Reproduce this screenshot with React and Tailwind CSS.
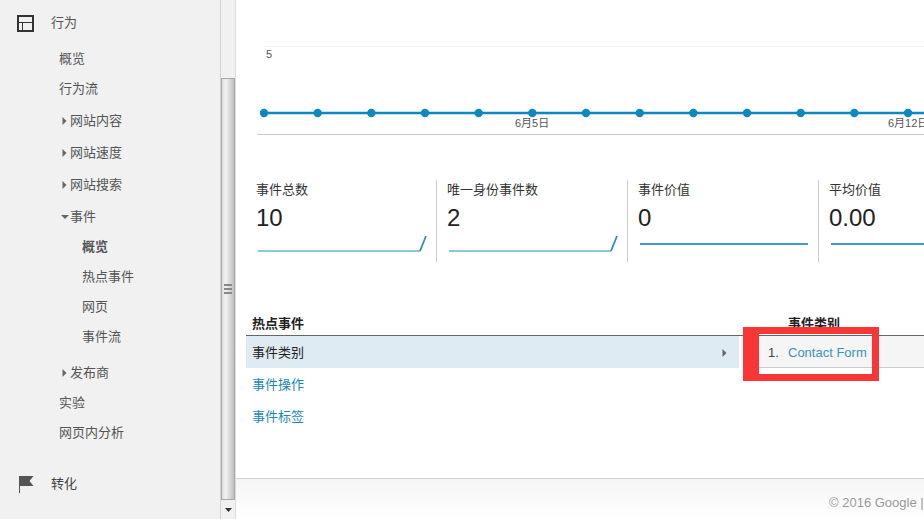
import React from 'react';

const cjk = { fontFamily: '"Liberation Sans", "Noto Sans CJK SC", sans-serif' };

const dots = Array.from({ length: 13 }, (_, i) => 18 + i * 53.67);

const metrics = [
  { label: '事件总数', value: '10', spike: true },
  { label: '唯一身份事件数', value: '2', spike: true },
  { label: '事件价值', value: '0', spike: false },
  { label: '平均价值', value: '0.00', spike: false },
];

const RightArrow = () => (
  <svg width="5" height="8" viewBox="0 0 5 8" className="shrink-0">
    <path d="M0.5 0 L4.5 4 L0.5 8 Z" fill="#666" />
  </svg>
);

const DownArrow = () => (
  <svg width="8" height="4" viewBox="0 0 8 4" className="shrink-0">
    <path d="M0 0 L8 0 L4 4 Z" fill="#666" />
  </svg>
);

const SubItem = ({ children, height = 'h-[30px]', extra = '' }) => (
  <div className={`flex items-center pl-[59px] ${height} ${extra}`}>{children}</div>
);

const TreeItem = ({ children, open, extra = '' }) => (
  <div className={`flex items-center h-[32px] pl-[59px] ${extra}`}>
    <span className="w-[11px] flex justify-center">{open ? <DownArrow /> : <RightArrow />}</span>
    <span>{children}</span>
  </div>
);

const Leaf = ({ children, bold, extra = '' }) => (
  <div className={`flex items-center h-[30px] pl-[82px] ${bold ? 'font-bold' : ''} ${extra}`}>{children}</div>
);

const Sidebar = () => (
  <div className="w-[220px] shrink-0 bg-[#f1f1f1] text-[13px] text-[#555] flex flex-col">
    <div className="flex items-center h-[46px] pl-[17px]">
      <svg width="17" height="17" viewBox="0 0 17 17" className="shrink-0">
        <rect x="1" y="1" width="15" height="15" fill="none" stroke="#333" strokeWidth="2" />
        <path d="M1 7.5 H16 M5.5 7.5 V16" stroke="#333" strokeWidth="1" fill="none" />
      </svg>
      <span className="ml-[17px]">行为</span>
    </div>
    <SubItem height="h-[26px]">概览</SubItem>
    <SubItem extra="mt-[2px]">行为流</SubItem>
    <TreeItem extra="mt-[1px]">网站内容</TreeItem>
    <TreeItem>网站速度</TreeItem>
    <TreeItem>网站搜索</TreeItem>
    <TreeItem open>事件</TreeItem>
    <Leaf bold extra="mt-[-1px]">概览</Leaf>
    <Leaf>热点事件</Leaf>
    <Leaf>网页</Leaf>
    <Leaf>事件流</Leaf>
    <TreeItem extra="mt-[5px]">发布商</TreeItem>
    <SubItem extra="mt-[-1px]">实验</SubItem>
    <SubItem>网页内分析</SubItem>
    <div className="flex items-center h-[32px] pl-[19px] mt-[20px]">
      <svg width="15" height="17" viewBox="0 0 15 17" className="shrink-0">
        <path d="M0 0 H1 V17 H0 Z" fill="#555" />
        <path d="M1 0 H14.5 L10.5 5 L14.5 10 H1 Z" fill="#555" />
      </svg>
      <span className="ml-[17px] text-[#444]">转化</span>
    </div>
  </div>
);

const Scrollbar = () => (
  <div className="w-[15px] shrink-0 bg-[#f1f1f1] border-l border-[#d4d4d4] flex flex-col">
    <div className="h-[78px] shrink-0" />
    <div className="h-[422px] shrink-0 border border-[#a8a8a8] bg-gradient-to-r from-[#dcdcdc] via-[#f2f2f2] via-30% to-[#bfbfbf] flex items-center justify-center">
      <div className="flex flex-col gap-[2px]">
        <div className="w-[8px] h-[2px] bg-[#888]" />
        <div className="w-[8px] h-[2px] bg-[#888]" />
        <div className="w-[8px] h-[2px] bg-[#888]" />
      </div>
    </div>
    <div className="flex-1 flex items-center justify-center">
      <svg width="7" height="4" viewBox="0 0 7 4">
        <path d="M0 0 H7 L3.5 4 Z" fill="#333" />
      </svg>
    </div>
  </div>
);

const Chart = () => (
  <svg width="678" height="90" viewBox="0 0 678 90" className="block ml-[10px]" style={cjk}>
    <line x1="18" y1="0.5" x2="678" y2="0.5" stroke="#f4f4f4" />
    <text x="20" y="12" fontSize="11" fill="#555">5</text>
    <line x1="18" y1="67" x2="678" y2="67" stroke="#0f87bf" strokeWidth="2.4" />
    {dots.map((x) => (
      <circle key={x} cx={x} cy="67" r="4.2" fill="#0f87bf" />
    ))}
    <text x="269" y="81" fontSize="11" fill="#555">6月5日</text>
    <text x="642" y="81" fontSize="11" fill="#555">6月12日</text>
    <line x1="11" y1="88.5" x2="678" y2="88.5" stroke="#c8c8c8" />
  </svg>
);

const Metric = ({ label, value, spike }) => (
  <div className="w-[191px] h-[82px] shrink-0 pl-[10px] border-r border-[#ccc] flex flex-col">
    <div className="text-[13px] leading-[18px] mt-[1px] text-[#333]">{label}</div>
    <div className="text-[24px] leading-[28px] mt-[5px] text-[#222]">{value}</div>
    <svg width="172" height="20" viewBox="0 0 172 20" className="block mt-[2px]">
      {spike ? (
        <>
          <path d="M2 17 H164" fill="none" stroke="#63b7d0" strokeWidth="1.6" />
          <path d="M164 17 L170 2" fill="none" stroke="#2f8fa8" strokeWidth="1.8" />
        </>
      ) : (
        <path d="M2 10 H170" fill="none" stroke="#3f9bc6" strokeWidth="2" />
      )}
    </svg>
  </div>
);

const EventTable = () => (
  <div className="relative mt-[50px] text-[13px]">
    <div className="flex h-[24px] pt-[2px] border-b border-[#666] font-bold text-[#222]">
      <div className="w-[493px] shrink-0 pl-[6px]">热点事件</div>
      <div className="pl-[49px]">事件类别</div>
    </div>
    <div className="flex">
      <div className="w-[493px] shrink-0">
        <div className="h-[32px] pt-[1px] bg-[#deebf3] pl-[6px] pr-[12px] flex items-center justify-between text-[#222]">
          <span>事件类别</span>
          <RightArrow />
        </div>
        <div className="h-[32px] pt-[1px] pl-[6px] flex items-center text-[#1a87b8]">事件操作</div>
        <div className="h-[32px] pt-[1px] pl-[6px] flex items-center text-[#1a87b8]">事件标签</div>
      </div>
      <div className="flex-1 h-[32px] pt-[2px] ml-[4px] bg-[#f5f5f5] border-b border-[#ccc] flex items-center pl-[25px]">
        <span className="w-[20px] text-[#444]">1.</span>
        <span className="text-[#3c92bf]">Contact Form</span>
      </div>
    </div>
    {/* red highlight drawn over the screenshot */}
    <div className="absolute left-[497px] top-[15px] w-[136px] h-[54px] border-[#f93636] border-y-[7px] border-r-[7px] border-l-[16px]" />
  </div>
);

const Footer = () => (
  <div className="mt-auto h-[41px] pt-[8px] border-t border-[#d0d0d0] bg-gradient-to-b from-[#f5f5f5] to-white flex items-center pl-[593px] text-[13px] text-[#999] whitespace-nowrap overflow-hidden">
    © 2016 Google |
  </div>
);

export default function App() {
  return (
    <div className="flex w-[924px] h-[519px] overflow-hidden bg-white" style={cjk}>
      <Sidebar />
      <Scrollbar />
      <div className="flex-1 min-w-0 border-l border-[#ddd] flex flex-col overflow-hidden">
        <div className="pt-[46px]">
          <Chart />
        </div>
        <div className="flex mt-[44px] ml-[10px] w-[800px]">
          {metrics.map((m) => (
            <Metric key={m.label} {...m} />
          ))}
        </div>
        <div className="ml-[10px]">
          <EventTable />
        </div>
        <Footer />
      </div>
    </div>
  );
}
